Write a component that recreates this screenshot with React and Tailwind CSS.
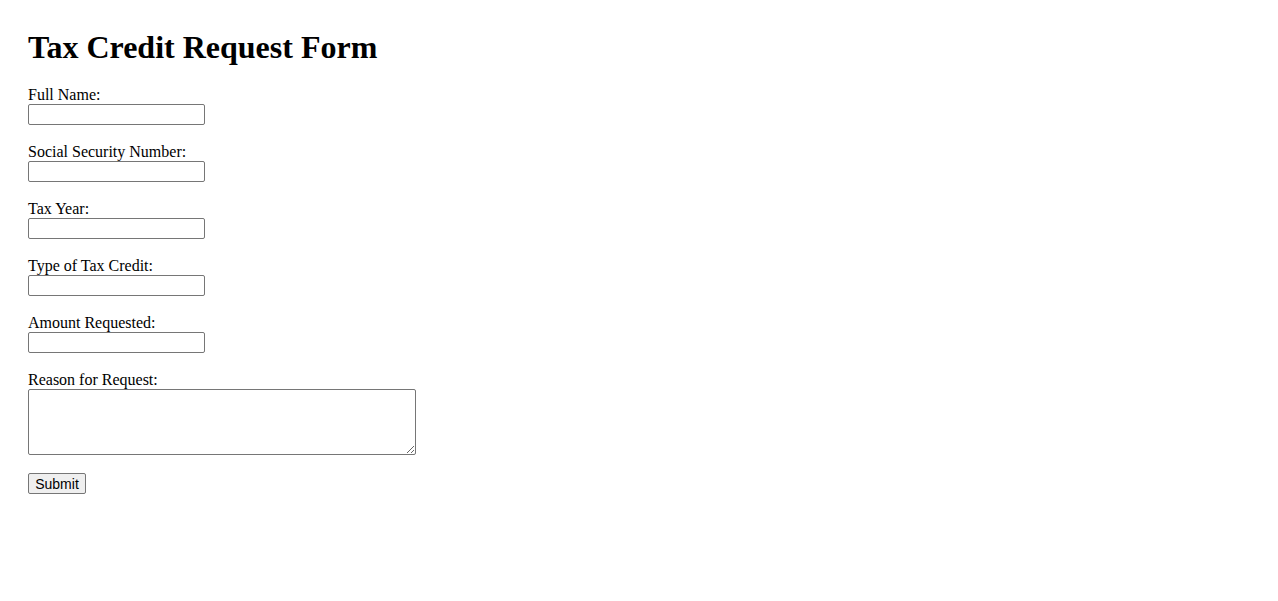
function App() {
  const fields = [
    "Full Name:",
    "Social Security Number:",
    "Tax Year:",
    "Type of Tax Credit:",
    "Amount Requested:",
  ];

  return (
    <div className="min-h-screen bg-white text-black px-[28px] pt-[29px] font-['Liberation_Serif',serif]">
      <h1 className="text-[32px] leading-[37px] font-bold mb-[20px]">Tax Credit Request Form</h1>

      <form className="flex flex-col items-start">
        {fields.map((label) => (
          <div key={label} className="flex flex-col items-start mb-[18px]">
            <label className="text-[16px] leading-[18px]">{label}</label>
            <input
              type="text"
              className="w-[177px] h-[21px] border border-[#767676] rounded-[2px] px-[2px] text-[13px] bg-white outline-none"
            />
          </div>
        ))}

        <div className="flex flex-col items-start mb-[18px]">
          <label className="text-[16px] leading-[18px]">Reason for Request:</label>
          <textarea className="w-[388px] h-[66px] border border-[#767676] rounded-[2px] px-[2px] text-[13px] bg-white outline-none resize"></textarea>
        </div>

        <button
          type="button"
          className="w-[58px] h-[21px] border border-[#767676] rounded-[2px] bg-[#efefef] text-[14px] leading-none font-['Liberation_Sans',sans-serif]"
        >
          Submit
        </button>
      </form>
    </div>
  );
}

export default App;
